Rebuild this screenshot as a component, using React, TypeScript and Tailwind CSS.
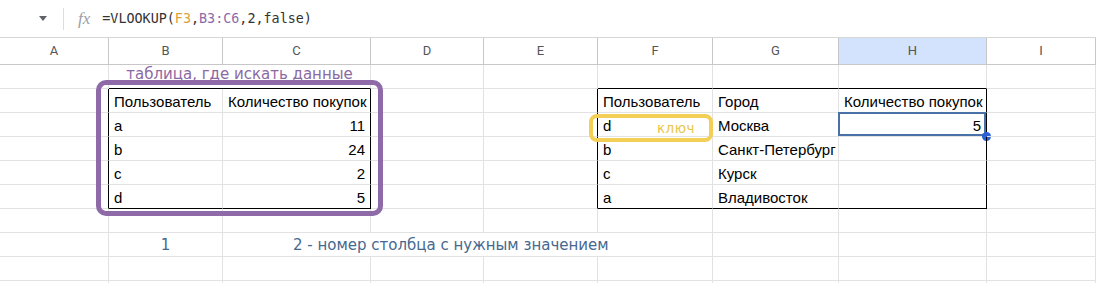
import React from 'react'

const cols = ['A', 'B', 'C', 'D', 'E', 'F', 'G', 'H', 'I']

type Cell = { text?: string; align?: 'left' | 'right' | 'center'; span?: number; note?: 'purple' | 'blue'; pad?: string }

// rows 1..10, keyed by column letter
const rows: Record<string, Cell>[] = [
  { B: { text: 'таблица, где искать данные', span: 2, align: 'center', note: 'purple' } },
  {
    B: { text: 'Пользователь' },
    C: { text: 'Количество покупок' },
    F: { text: 'Пользователь' },
    G: { text: 'Город' },
    H: { text: 'Количество покупок' },
  },
  { B: { text: 'a' }, C: { text: '11', align: 'right' }, F: { text: 'd' }, G: { text: 'Москва' }, H: { text: '5', align: 'right' } },
  { B: { text: 'b' }, C: { text: '24', align: 'right' }, F: { text: 'b' }, G: { text: 'Санкт-Петербург' } },
  { B: { text: 'c' }, C: { text: '2', align: 'right' }, F: { text: 'c' }, G: { text: 'Курск' } },
  { B: { text: 'd' }, C: { text: '5', align: 'right' }, F: { text: 'a' }, G: { text: 'Владивосток' } },
  {},
  {
    B: { text: '1', align: 'center', note: 'blue' },
    C: { text: '2 - номер столбца с нужным значением', span: 4, note: 'blue', pad: 'pl-[70px]' },
  },
  {},
  {},
]

function inTable(c: string) {
  return c === 'B' || c === 'C' || c === 'F' || c === 'G' || c === 'H'
}

function FormulaBar() {
  return (
    <div className="flex h-[38px] items-center border-b border-[#d6d6d6] bg-white">
      <div className="ml-[39px] h-0 w-0 border-x-[4px] border-t-[5px] border-x-transparent border-t-[#5f6368]" />
      <div className="ml-[16px] h-[22px] w-px bg-[#dadce0]" />
      <span className="ml-[14px] font-['Liberation_Serif',serif] text-[17px] italic text-[#9aa0a6]">fx</span>
      <span className="ml-[12px] mt-[2px] font-['DejaVu_Sans_Mono',monospace] text-[13.4px] text-[#333]">
        =VLOOKUP(<span className="text-[#d9a23c]">F3</span>,<span className="text-[#8e6aa6]">B3:C6</span>,2,false)
      </span>
    </div>
  )
}

export default function App() {
  return (
    <div className="relative h-[283px] w-[1096px] overflow-hidden bg-white font-['Liberation_Sans',Arial,sans-serif]">
      <FormulaBar />

      <div className="grid grid-cols-[109px_114px_148px_113px_114px_115px_126px_148px_1fr]">
        {cols.map((c) => (
          <div
            key={c}
            className={`flex h-[27px] items-center justify-center border-r border-b border-[#c7c7c7] font-['Roboto',sans-serif] text-[13px] text-[#555] ${
              c === 'H' ? 'bg-[#d3e3fd] text-[#1f1f1f]' : 'bg-white'
            }`}
          >
            {c}
          </div>
        ))}

        {rows.map((row, i) => {
          const r = i + 1
          const out: React.ReactNode[] = []
          let skip = 0
          cols.forEach((c, ci) => {
            if (skip > 0) {
              skip--
              return
            }
            const cell = row[c] || {}
            const span = cell.span || 1
            skip = span - 1
            const last = cols[ci + span - 1]
            const rightBlack = r >= 2 && r <= 6 && (last === 'A' || last === 'C' || last === 'E' || last === 'H')
            const bottomBlack = (r === 1 || r === 6) && inTable(c)
            const rb = rightBlack ? 'border-r-black' : 'border-r-[#e2e2e2]'
            const bb = bottomBlack ? 'border-b-black' : 'border-b-[#e2e2e2]'
            const spanCls = span === 2 ? 'col-span-2' : span === 4 ? 'col-span-4' : ''
            const alignCls =
              cell.align === 'right' ? 'justify-end' : cell.align === 'center' ? 'justify-center' : 'justify-start'
            const noteCls =
              cell.note === 'purple'
                ? "font-['DejaVu_Sans',sans-serif] text-[15px] text-[#8c69a3] items-start"
                : cell.note === 'blue'
                  ? "font-['DejaVu_Sans',sans-serif] text-[15px] text-[#46688f] items-center"
                  : 'text-[15px] text-black items-end pb-[1px]'
            const selected = r === 3 && c === 'H'
            out.push(
              <div
                key={`${r}-${c}`}
                className={`relative flex h-[24px] border-r border-b px-[5px] leading-[18px] whitespace-nowrap ${rb} ${bb} ${spanCls} ${alignCls} ${noteCls} ${cell.pad || ''}`}
              >
                {cell.text}
                {selected && (
                  <>
                    <div className="pointer-events-none absolute -left-px -top-px right-0 bottom-0 border-2 border-[#4a70a8]" />
                    <div className="absolute -right-[5px] -bottom-[5px] h-[9px] w-[9px] rounded-full bg-[#2b5fd5]" />
                  </>
                )}
              </div>,
            )
          })
          return out
        })}
      </div>

      {/* purple frame around the lookup range */}
      <div className="pointer-events-none absolute left-[96px] top-[80px] h-[136px] w-[287px] rounded-[10px] border-[5px] border-[#8f6aa8]" />

      {/* yellow key frame */}
      <div className="pointer-events-none absolute left-[589px] top-[114px] flex h-[28px] w-[124px] items-center justify-end rounded-[8px] border-[4px] border-[#f3cf55] pr-[14px]">
        <span className="font-['DejaVu_Sans',sans-serif] text-[13.5px] tracking-[0.5px] text-[#e8c64a]">ключ</span>
      </div>
    </div>
  )
}
